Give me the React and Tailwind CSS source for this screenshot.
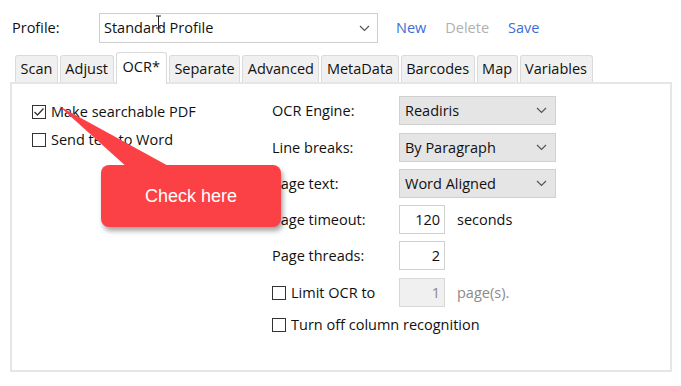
import React from 'react'

const font = { fontFamily: '"Open Sans", "Noto Sans", Arial, sans-serif' }

function Chevron({ className = '' }) {
  return (
    <svg className={className} width="11" height="7" viewBox="0 0 11 7" fill="none">
      <path d="M1 1l4.5 4.5L10 1" stroke="#555" strokeWidth="1.2" />
    </svg>
  )
}

function Check({ checked = false }) {
  return (
    <span className="w-[14px] h-[14px] border border-[#333] bg-white flex items-center justify-center shrink-0">
      {checked && (
        <svg width="12" height="10" viewBox="0 0 12 10" fill="none">
          <path d="M1.5 5l3 3L10.5 1.5" stroke="#333" strokeWidth="1.3" />
        </svg>
      )}
    </span>
  )
}

function Select({ value }) {
  return (
    <div className="w-[157px] h-[29px] bg-[#e5e5e5] border border-[#d0d0d0] flex items-center justify-between pl-[5px] pr-[8px] text-[14.5px] text-[#111]">
      <span>{value}</span>
      <Chevron />
    </div>
  )
}

function NumBox({ value, disabled = false }) {
  return (
    <div
      className={
        'w-[46px] h-[29px] border flex items-center justify-end pr-[4px] text-[14.5px] ' +
        (disabled ? 'bg-[#f0f0f0] border-[#d8d8d8] text-[#8a8a8a]' : 'bg-white border-[#d0d0d0] text-[#111]')
      }
    >
      {value}
    </div>
  )
}

const tabs = ['Scan', 'Adjust', 'OCR*', 'Separate', 'Advanced', 'MetaData', 'Barcodes', 'Map', 'Variables']

export default function App() {
  return (
    <div className="w-[681px] h-[386px] bg-white relative overflow-hidden text-[#111] text-[14.5px]" style={font}>
      {/* Profile row */}
      <div className="flex items-center pt-[13px] pl-[12px]">
        <span className="w-[87px]">Profile:</span>
        <div className="relative w-[279px] h-[30px] border border-[#cfcfcf] bg-white flex items-center justify-between pl-[4px] pr-[7px]">
          <span>Standard Profile</span>
          <Chevron />
          <svg className="absolute left-[55px] top-[1px]" width="7" height="14" viewBox="0 0 7 14" fill="none">
            <path d="M1 1h5M3.5 1v12M1 13h5" stroke="#222" strokeWidth="1" />
          </svg>
        </div>
        <div className="flex items-center gap-[19px] ml-[18px]">
          <span className="text-[#3b6ed8]">New</span>
          <span className="text-[#b0b0b0]">Delete</span>
          <span className="text-[#3b6ed8]">Save</span>
        </div>
      </div>

      {/* Tabs */}
      <div className="flex items-end pl-[15px] mt-[9px] h-[30px] gap-[2px] relative z-10">
        {tabs.map((t) =>
          t === 'OCR*' ? (
            <div
              key={t}
              className="h-[32px] px-[6px] bg-white border border-b-0 border-[#dadada] rounded-t-[3px] flex items-center -mb-[2px] pb-[4px]"
            >
              {t}
            </div>
          ) : (
            <div
              key={t}
              className="h-[27px] px-[4.5px] bg-[#f0f0f0] border border-b-0 border-[#dadada] rounded-t-[3px] flex items-center"
            >
              {t}
            </div>
          )
        )}
      </div>

      {/* Panel */}
      <div className="mx-[10px] w-[662px] h-[290px] border-2 border-[#e6e6e6] flex">
        <div className="w-[260px] pl-[20px] pt-[19px] flex flex-col gap-[11px]">
          <label className="flex items-center gap-[5px] h-[17px]">
            <Check checked />
            Make searchable PDF
          </label>
          <label className="flex items-center gap-[5px] h-[17px]">
            <Check />
            Send text to Word
          </label>
        </div>
        <div className="pt-[12px] flex flex-col gap-[7px]">
          <div className="flex items-center h-[29px]">
            <span className="w-[127px]">OCR Engine:</span>
            <Select value="Readiris" />
          </div>
          <div className="flex items-center h-[29px] mt-[1px]">
            <span className="w-[127px]">Line breaks:</span>
            <Select value="By Paragraph" />
          </div>
          <div className="flex items-center h-[29px]">
            <span className="w-[127px]">Page text:</span>
            <Select value="Word Aligned" />
          </div>
          <div className="flex items-center h-[29px]">
            <span className="w-[127px]">Page timeout:</span>
            <NumBox value="120" />
            <span className="ml-[12px]">seconds</span>
          </div>
          <div className="flex items-center h-[29px]">
            <span className="w-[127px]">Page threads:</span>
            <NumBox value="2" />
          </div>
          <div className="flex items-center h-[29px] mt-[1px]">
            <label className="w-[127px] flex items-center gap-[5px]">
              <Check />
              Limit OCR to
            </label>
            <NumBox value="1" disabled />
            <span className="ml-[12px] text-[#8a8a8a]">page(s).</span>
          </div>
          <div className="flex items-center h-[22px]">
            <label className="flex items-center gap-[5px]">
              <Check />
              Turn off column recognition
            </label>
          </div>
        </div>
      </div>

      {/* Callout */}
      <svg className="absolute left-0 top-0 pointer-events-none" width="681" height="386">
        <polygon points="59,106 128,168 172,168" fill="#fb4146" />
      </svg>
      <div
        className="absolute left-[101px] top-[165px] w-[180px] h-[62px] rounded-[8px] bg-[#fb4146] flex items-center justify-center text-white text-[18px] shadow-[2px_4px_5px_rgba(0,0,0,0.35)]"
        style={{ fontFamily: '"Liberation Sans", Arial, sans-serif' }}
      >
        Check here
      </div>
    </div>
  )
}
